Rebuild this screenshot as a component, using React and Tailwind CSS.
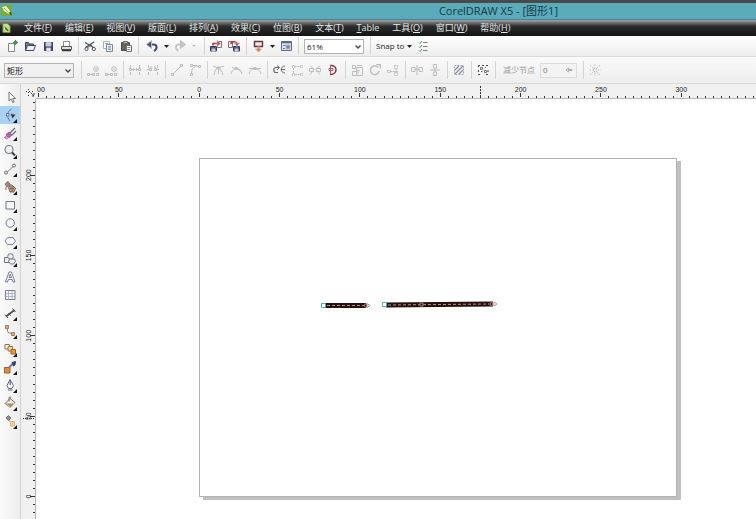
import React, { useEffect, useState } from "react";

const menus = [
  { label: "文件", hotkey: "F" },
  { label: "编辑", hotkey: "E" },
  { label: "视图", hotkey: "V" },
  { label: "版面", hotkey: "L" },
  { label: "排列", hotkey: "A" },
  { label: "效果", hotkey: "C" },
  { label: "位图", hotkey: "B" },
  { label: "文本", hotkey: "T" },
  { label: "Table" },
  { label: "工具", hotkey: "O" },
  { label: "窗口", hotkey: "W" },
  { label: "帮助", hotkey: "H" },
];

// 50 ruler units, in pixels at 61% zoom
const MAJOR = 80.35;
const MINOR = MAJOR / 10;

const icons = {
  // standard toolbar
  new: (
    <>
      <path d="M4.5 5.5h6v8h-6z" fill="#fff" stroke="#7d8a86" />
      <path d="M9 4.5h5M11.5 2v5M10 3l3 3M13 3l-3 3" stroke="#3f9a48" />
    </>
  ),
  open: (
    <>
      <path d="M3.5 12.5v-8h3l1 1.5h4v2" fill="#6f7c96" stroke="#3c4764" />
      <path d="M3.5 12.5l2-5h8l-2 5z" fill="#eef2f8" stroke="#3c4764" />
    </>
  ),
  save: (
    <>
      <path d="M4.5 4.5h8v8h-8z" fill="#44507c" stroke="#303a5e" />
      <path d="M6 4.5h5v3.5H6z" fill="#c9d1e6" />
      <path d="M6.5 10h4v3h-4z" fill="#f2f4fa" />
    </>
  ),
  print: (
    <>
      <path d="M5.5 8V3.5h6V8" fill="#fff" stroke="#8a8a8a" />
      <path d="M3.5 8.5h10v3h-10z" fill="#dedede" stroke="#555" />
      <path d="M4 12.5h9" stroke="#333" strokeWidth="1.5" />
    </>
  ),
  cut: (
    <>
      <path d="M3 4.5l8.5 5M3.5 9.5L12 4" stroke="#4c5360" strokeWidth="1.3" />
      <circle cx="4.5" cy="11" r="1.6" stroke="#4c5360" />
      <circle cx="11.8" cy="11" r="1.6" stroke="#4c5360" />
      <path d="M5.5 9.8L9 7l2 2.5" stroke="#4c5360" />
    </>
  ),
  copy: (
    <>
      <path d="M3.5 3.5h6v7h-6z" fill="#fff" stroke="#9eb5ae" />
      <path d="M6.5 6.5h6v7h-6z" fill="#eef3fa" stroke="#7b8798" />
      <path d="M8 8.5h3M8 10h3M8 11.5h3M5 5.5h3" stroke="#6889b5" strokeWidth=".8" />
    </>
  ),
  paste: (
    <>
      <path d="M3.5 4.5h8v8h-8z" fill="#68645a" stroke="#4f4a3c" />
      <path d="M5.5 3.5h4v2h-4z" fill="#c9c7bb" stroke="#686450" />
      <path d="M8.5 7.5h5v6h-5z" fill="#fff" stroke="#6d6d78" />
      <path d="M9.5 9.5h3M9.5 11.5h3" stroke="#8291ab" />
    </>
  ),
  undo: (
    <>
      <path d="M5 6.5h4.5c4 0 4 4.5.5 6.5" stroke="#3d4f77" strokeWidth="2" />
      <path d="M2.5 6.5L7.5 2.5v8z" fill="#3d4f77" />
    </>
  ),
  redo: (
    <>
      <path d="M11 6.5H7c-4 0-4 4.5-.5 6.5" stroke="#c4c6ca" strokeWidth="1.8" />
      <path d="M13.5 6.5l-5-4v8z" fill="#c4c6ca" />
    </>
  ),
  import: (
    <>
      <path d="M2.5 8.500h6v4.500h-6z" fill="#56608c" stroke="#343b62" />
      <path d="M4 11h3v2H4z" fill="#e8eaf4" />
      <path d="M9.5 3.5h4v6h-4z" fill="#f4f1f1" stroke="#856f76" />
      <path d="M5 7.5V5.5h5" stroke="#bb352f" strokeWidth="1.6" />
      <path d="M9 2.5l3.5 3L9 8.5z" fill="#bb352f" />
    </>
  ),
  export: (
    <>
      <path d="M7.500 8.500h6v4.500h-6z" fill="#56608c" stroke="#343b62" />
      <path d="M9 11h3v2H9z" fill="#e8eaf4" />
      <path d="M2.5 3.5h4v6h-4z" fill="#f4f1f1" stroke="#856f76" />
      <path d="M5 6c0-3 5-3 6-.5" stroke="#bb352f" strokeWidth="1.6" />
      <path d="M8.500 5h5L11 8.500z" fill="#bb352f" />
    </>
  ),
  launcher: (
    <>
      <path d="M4.5 3.5h8v5h-8z" fill="#f1e8ea" stroke="#6c3138" strokeWidth="1.4" />
      <path d="M7.5 9h2v2h2l-3 3-3-3h2z" fill="#e27a31" />
    </>
  ),
  welcome: (
    <>
      <path d="M3.5 3.5h10v9h-10z" fill="#dfe6f4" stroke="#5d6b8a" />
      <path d="M3.5 4.5h10" stroke="#5d6b8a" strokeWidth="1.6" />
      <path d="M5 7.5h3M5 10.5h2" stroke="#5d7bb5" />
      <path d="M8 7h4v4H8z" fill="#7281a5" />
    </>
  ),
  options: (
    <>
      <path d="M4 4.5l1 1 2-2.5M4 8.5l1 1 2-2.5M4 12.5l1 1 2-2.5" stroke="#559252" />
      <path d="M8 4.5h4.5M8 8.5h4.5M8 12.5h4.5" stroke="#7b857b" />
    </>
  ),
  // node editing bar
  addNode: (
    <>
      <path d="M2.5 11.5h2v2h-2zM7.5 11.5h2v2h-2zM11.5 11.5h2v2h-2zM4 12.5h3.5" />
      <circle cx="11" cy="7" r="2.4" />
      <path d="M10 7h2M11 6v2" />
    </>
  ),
  deleteNode: (
    <>
      <path d="M2.5 11.5h2v2h-2zM7.5 11.5h2v2h-2zM11.5 11.5h2v2h-2zM4 12.5h3.5" />
      <circle cx="11" cy="7" r="2.4" />
      <path d="M10 7h2" />
    </>
  ),
  joinNodes: (
    <path d="M3.5 3v3M3.5 10v3M12.5 3v3M12.5 10v3M2.5 6.5h2v2h-2zM11.5 6.5h2v2h-2zM5 7.5h2M9 7.5h2M6 6l1.5 1.5L6 9M10 6L8.5 7.5 10 9" />
  ),
  breakCurve: (
    <path d="M3.5 3v3M3.5 10v3M12.5 3v3M12.5 10v3M4.5 6.5h2v2h-2zM9.5 6.5h2v2h-2zM2 7.5h2M12 7.5h2M7 4.5l-2 1M9 4.5l2 1" />
  ),
  toLine: <path d="M4 12l8-8M2.5 11.5h2v2h-2zM11.5 2.5h2v2h-2z" />,
  toCurve: <path d="M4.5 11c0-4 2-7 7-7M3.5 11.5h2v2h-2zM11.5 3.5h2v2h-2zM3.5 2.5h2v2h-2zM5 3.5h5" />,
  cusp: <path d="M3 13c1-4 2-7 4-7s4 3 5 7M2 4l5 2 6-2M6 5h3v2H6zM7.5 7v5" />,
  smooth: <path d="M2 12c1-4 3-5 6-5s4 2 5 5M3 5.5l9 3M6.5 5.5h2v2h-2z" />,
  symmetrical: <path d="M2 12c1-4 3-5 6-5s5 1 6 5M2 6.5h12M7 5.5h2v2H7z" />,
  reverse: (
    <>
      <path d="M8 5.5H5c-3 0-3 5 0 5h2" stroke="#666" strokeWidth="1.2" />
      <path d="M6 3.5l2.500 2L6 8M14 4c-5 0-5 7 0 7M10 7.500h4" stroke="#66696c" />
    </>
  ),
  extend: (
    <path
      d="M3.5 3.5h2v2h-2zM11.5 3.5h2v2h-2zM11.5 11.5h2v2h-2zM3.5 11.5h2v2h-2zM5.5 4.5h6M4.5 6v5M6 12.5h5"
      strokeDasharray="2 .8"
    />
  ),
  extract: <path d="M3 3.5l4 4-4 5M13 3.5l-4 4 4 5M2.5 6.5h4v3h-4zM9.5 6.5h4v3h-4z" />,
  closeCurve: (
    <>
      <path d="M5 3.5c8-1 8 9 0 9" stroke="#8a3242" strokeWidth="1.5" />
      <path d="M5.5 3v9M4 6.5h4v2H4z" stroke="#a0606a" />
    </>
  ),
  stretch: <path d="M3.5 3.5h3v3h-3zM3.5 9.5h4v4h-4zM7.5 5.5h6v8h-6zM9 12V8l-1.5 1M9 8l2 1M8 3.5h5" />,
  rotate: (
    <>
      <path d="M10.5 5A4.3 4.3 0 1 0 12 9" strokeWidth="1.5" />
      <path d="M9 2.5h4.5v4M13.5 2.5L10 6" />
    </>
  ),
  align: <path d="M9.5 3.5h3v3h-3zM2.5 8.5h3v2h-3zM9.5 10.5h3v3h-3zM5.5 9.5h8M11 6.5v4" strokeDasharray="2 .6" />,
  reflectH: <path d="M8 3v10M2.5 5.5H6v4H2.5zM10 5.5h3.5v4H10zM6 7.5h4" />,
  reflectV: <path d="M3 8h10M6.5 2.5h3V6h-3zM6.5 10h3v3.5h-3zM8 6v4" />,
  elastic: (
    <>
      <path d="M3.5 3.5h9v9h-9z" stroke="#a3a8b0" strokeDasharray="2 1" />
      <path d="M4 8l4-4M4 12l8-8M8 12l4-4" stroke="#858a98" strokeWidth="1.1" />
    </>
  ),
  selectAll: (
    <>
      <path d="M3 3.5h2M3.5 3v2M13 3.5h-2M3 12.5h2M13 12.5h-2M7 3.5h2M3.5 8v2M13 8v2" stroke="#444" />
      <path d="M5.5 5.5h2v2h-2zM9.5 8.5h2v2h-2zM6 9.5h1.5M10 5.5h1" stroke="#777" />
    </>
  ),
  bounding: (
    <path
      d="M3 3l3 3M13 3l-3 3M3 13l3-3M13 13l-3-3M8 2.5v3M8 10.5v3M2.5 8h3M10.5 8h3M6.5 6.5h3v3h-3z"
      strokeDasharray="1.5 1"
    />
  ),
  // toolbox
  pick: <path d="M7 3v9l2.2-2 1.5 3.5 1.5-.7-1.6-3.3h3z" fill="#fff" stroke="#666" strokeWidth=".9" />,
  shape: (
    <>
      <path d="M9.5 2C4.5 5 4.5 10 8 14" stroke="#55779a" />
      <path d="M4.5 6.5H7V9H4.5z" fill="#fff" stroke="#55779a" />
      <path d="M8 6.5l6 .8-3.5 4.7z" fill="#1c2f57" />
    </>
  ),
  crop: (
    <>
      <path d="M8 8l5-5M10 10l4-4" stroke="#666a76" strokeWidth="1.2" />
      <path d="M4 9.500l3-2.500 3 3-3 2.500z" fill="#c25da5" stroke="#8d4a80" strokeWidth=".8" />
      <path d="M2.500 12.500l2.500-2 1.500 2-2 1.500z" fill="#e7a3d2" stroke="#9b5188" strokeWidth=".8" />
    </>
  ),
  zoom: (
    <>
      <circle cx="7" cy="6.5" r="4" fill="#eef1f2" stroke="#71777b" strokeWidth="1.1" />
      <path d="M5 5c1-1 2-1 3-.5" stroke="#fff" />
      <path d="M10 9.5l3 3" stroke="#3a3d3f" strokeWidth="2" />
    </>
  ),
  freehand: (
    <>
      <path d="M4 12l8-7" stroke="#7c8287" />
      <circle cx="4" cy="11.5" r="1.5" fill="#dcdfe0" stroke="#73787a" />
      <circle cx="12" cy="4.5" r="1.5" fill="#dcdfe0" stroke="#73787a" />
    </>
  ),
  smartFill: (
    <>
      <path d="M3 5l3-2.500L8.500 6 5 8z" fill="#a88c78" stroke="#69584e" strokeWidth=".8" />
      <path d="M6.500 8.500l3-2.500 4 3-1.500 4H8z" fill="#bd987a" stroke="#705b50" strokeWidth=".9" />
      <path d="M4 8v3M8 9.500h4M10 7v6" stroke="#82685a" />
    </>
  ),
  rectangle: <path d="M4 4.500h8.500V12H4z" fill="#f7f8fa" stroke="#6f7886" />,
  ellipse: <ellipse cx="8.2" cy="8" rx="4.2" ry="4.2" fill="#f5f6fa" stroke="#73798a" />,
  polygon: <path d="M5.5 4.5H11L13.5 8 11 11.5H5.500L3 8z" fill="#f5f6fa" stroke="#7c8392" />,
  basicShapes: (
    <>
      <path d="M2.5 6.5h5v5h-5z" fill="#eceef2" stroke="#6e7482" />
      <circle cx="8.5" cy="5.5" r="2.8" fill="#eceef2" stroke="#6e7482" />
      <path d="M7.500 8h5l1 2.500-2 2.500h-3l-2-2.500z" fill="#eceef2" stroke="#6e7482" />
    </>
  ),
  text: (
    <path
      d="M3.5 13L7 3h2.500L13 13h-2l-.9-2.500H6.400L5.500 13zM7 8.500h2.500L8.200 5z"
      fill="#f4f5f9"
      stroke="#6e7486"
      strokeWidth=".9"
    />
  ),
  table: (
    <>
      <path d="M3.5 3.5H13v9H3.5z" fill="#f4f5fa" stroke="#787e8e" />
      <path d="M6.5 4v8.500M10 4v8.500M4 6.500h9M4 9.500h9" stroke="#a5aaba" strokeWidth=".8" />
    </>
  ),
  dimension: (
    <>
      <path d="M4 11.5L12.5 5" stroke="#4a4d50" strokeWidth="1.6" />
      <path d="M3 9.5l3 3.500M10.500 3.500l3 3.500M6.500 8l2 2.500" stroke="#4a4d50" />
    </>
  ),
  connector: (
    <>
      <path d="M5 5.5l1 4 4 1" stroke="#858585" />
      <path d="M3.5 2.5h3v3h-3z" fill="#e2a877" stroke="#9b6843" strokeWidth=".8" />
      <path d="M9.5 9.5h3v3h-3z" fill="#e2a877" stroke="#9b6843" strokeWidth=".8" />
    </>
  ),
  blend: (
    <>
      <path d="M3 3.5h4.5V8H3z" fill="#fff" stroke="#8a7254" />
      <path d="M6 5.5h4.5V10H6z" fill="#f6d4a0" stroke="#9b733e" />
      <path d="M9 8.5h4.5V13H9z" fill="#e9993b" stroke="#a86320" />
    </>
  ),
  eyedropper: (
    <>
      <path d="M2.5 8.5H8V14H2.5z" fill="#dd8b42" stroke="#a65f25" />
      <path d="M7 8.5l4-4" stroke="#6e7fa8" strokeWidth="2" />
      <path d="M10 3.5l3.5-1L13 6l-1.5 1z" fill="#35466e" stroke="#35466e" />
    </>
  ),
  outline: (
    <>
      <path d="M8 2.5l-3 6 1.5 3H10l1.500-3z" fill="#f6f7fb" stroke="#5f6980" />
      <path d="M8.2 3v5M6 13h4.5" stroke="#5f6980" strokeWidth="1.2" />
    </>
  ),
  fill: (
    <>
      <path d="M3 8.5l5-5 5 4-4.500 5z" fill="#f7efe2" stroke="#776b5b" />
      <path d="M4 8.5h8.500l-4 3.800z" fill="#b88646" />
      <path d="M7 6.5V3c0-1.500 2-1.500 2 0" stroke="#776b5b" />
    </>
  ),
  interactiveFill: (
    <>
      <path d="M4 5l2.500-2.500L9 5 6.500 7.500z" fill="#8c8c93" stroke="#62626c" strokeWidth=".8" />
      <path d="M6.500 7l3 3" stroke="#9b8358" />
      <path d="M8.500 8.500h4V13h-4z" fill="#f3cf8f" stroke="#dcb77d" />
    </>
  ),
};

const standardBar = [
  ["new", "open", "save", "print"],
  ["cut", "copy", "paste"],
];

const nodeBar = [
  ["addNode", "deleteNode"],
  ["joinNodes", "breakCurve"],
  ["toLine", "toCurve"],
  ["cusp", "smooth", "symmetrical"],
  ["reverse", "extend", "extract", "closeCurve"],
  ["stretch", "rotate", "align"],
  ["reflectH", "reflectV"],
  ["elastic"],
  ["selectAll"],
];

const tools = [
  "pick",
  "shape",
  "crop",
  "zoom",
  "freehand",
  "smartFill",
  "rectangle",
  "ellipse",
  "polygon",
  "basicShapes",
  "text",
  "table",
  "dimension",
  "connector",
  "blend",
  "eyedropper",
  "outline",
  "fill",
  "interactiveFill",
];

// tools that have no flyout menu
const plainTools = ["pick", "text", "table"];

const Icon = ({ name }) => (
  <svg viewBox="0 0 16 16" className="size-4 text-[#bdbdbd]" fill="none" stroke="currentColor">
    {icons[name]}
  </svg>
);

const IconButton = ({ name }) => (
  <button type="button" aria-label={name} className="flex h-[18px] w-[18px] shrink-0 items-center justify-center">
    <Icon name={name} />
  </button>
);

const DropArrow = ({ label, disabled }) => (
  <button type="button" aria-label={label} className="flex h-4 w-[10px] shrink-0 items-center justify-center">
    <svg viewBox="0 0 5 3" className={disabled ? "h-[2px] w-1 text-[#b5b5b5]" : "h-[3px] w-[5px] text-[#222]"}>
      <path d="M0 0h5L2.5 3z" fill="currentColor" />
    </svg>
  </button>
);

const Separator = () => <span className="mr-[2px] ml-[3px] h-[18px] w-px shrink-0 bg-[#d3d3d3]" />;

const Select = ({ label, value, options, onChange, className }) => (
  <div className={`relative h-[15px] shrink-0 ${className}`}>
    <select
      aria-label={label}
      value={value}
      onChange={(e) => onChange(e.target.value)}
      className="block h-full w-full appearance-none border border-[#b4b4b4] pl-[2px] text-[8px] leading-[13px] text-[#111]"
    >
      {options.map((option) => (
        <option key={option}>{option}</option>
      ))}
    </select>
    <svg viewBox="0 0 6 4" className="pointer-events-none absolute top-[6px] right-[3px] h-1 w-[6px]" fill="none">
      <path d="M.5.5L3 3 5.5.5" stroke="#444" strokeWidth="1.3" />
    </svg>
  </div>
);

const HorizontalRuler = () => {
  const [width, setWidth] = useState(window.innerWidth);

  useEffect(() => {
    const handleResize = () => setWidth(window.innerWidth);
    window.addEventListener("resize", handleResize);
    return () => window.removeEventListener("resize", handleResize);
  }, []);

  const count = Math.ceil((width - 50) / MINOR) + 2;
  const ticks = Array.from({ length: count }, (_, i) => i);
  // the first number is cut by the corner, so only its last two digits show
  const labels = ticks.filter((i) => i % 10 === 0 && i > 0 && i * MINOR < width - 50);

  return (
    <svg className="h-[15px] min-w-0 flex-1 border-b border-[#b5b5b5]">
      {ticks.map((i) => {
        const x = Math.floor(2.5 + i * MINOR) + 0.5;
        const major = i % 10 === 0;
        return <path key={i} d={`M${x} ${major ? 9 : 12}V${major ? 13 : 14}`} stroke="#333" />;
      })}
      <text x="1" y="8" className="fill-[#222] text-[7px]">
        00
      </text>
      {labels.map((i) => (
        <text key={i} x={2.5 + i * MINOR} y="8" textAnchor="middle" className="fill-[#222] text-[7px]">
          {Math.abs((i / 10 - 2) * 50)}
        </text>
      ))}
      <path d="M444.5 2v12" stroke="#333" strokeDasharray="2 1" />
    </svg>
  );
};

const VerticalRuler = () => {
  const ticks = Array.from({ length: 100 }, (_, i) => i - 50);
  return (
    <svg className="w-[15px] shrink-0 border-r border-[#b5b5b5]">
      {ticks.map((i) => {
        const y = Math.floor(397.5 + i * MINOR) + 0.5;
        return <path key={i} d={`M${i % 10 === 0 ? 9 : 12} ${y}H14`} stroke="#333" />;
      })}
      {[0, 50, 100, 150, 200].map((value) => {
        const y = 397.5 - (value / 50) * MAJOR;
        return (
          <text
            key={value}
            x="10"
            y={y}
            textAnchor="middle"
            transform={`rotate(-90 10 ${y})`}
            className="fill-[#222] text-[7px]"
          >
            {value}
          </text>
        );
      })}
      <path d="M2 319.5h12" stroke="#333" strokeDasharray="1 1" />
    </svg>
  );
};

const Drawing = () => (
  <svg viewBox="1 0 476 337" className="h-full w-full" fill="none">
    <path d="M126 146.5h41" stroke="#2a100c" strokeWidth="5" />
    <path d="M128 146.5h38" stroke="#a89884" strokeDasharray="3 2" />
    <path d="M122.5 144.5h4v4h-4z" fill="#fff" stroke="#4fb3b3" />
    <path d="M165.5 145h2v3h-2z" stroke="#8f7165" />
    <path d="M168 144.5l3 2-3 2z" fill="#fff" stroke="#888" strokeWidth=".8" />

    <path d="M187 146l107-1" stroke="#2a100c" strokeWidth="5" />
    <path d="M189 146l104-1" stroke="#a89884" strokeDasharray="3 2" />
    <path d="M183.5 143.5h4v4h-4z" fill="#fff" stroke="#4fb3b3" />
    <path d="M221 144h3v3h-3z" fill="#2a100c" stroke="#a38477" />
    <path d="M291.5 143.5h2v3h-2z" stroke="#8f7165" />
    <path d="M295 143l3 2-3 2z" fill="#fff" stroke="#888" strokeWidth=".8" />
  </svg>
);

const App = () => {
  const [tool, setTool] = useState("shape");
  const [zoom, setZoom] = useState("61%");
  const [mode, setMode] = useState("矩形");
  const [reduce, setReduce] = useState("0");

  return (
    <div className="flex min-h-screen flex-col overflow-hidden bg-[#f0f0f0] font-['Open_Sans','Noto_Sans_CJK_SC',sans-serif] text-[#222]">
      <header className="flex h-5 shrink-0 items-center border-t-[3px] border-b border-t-[#494949] border-b-[#477f8c] bg-[#5aabbb]">
        <svg viewBox="0 0 12 12" className="ml-[1px] h-3 w-3" fill="none">
          <path d="M0 0h11v11H0z" fill="#78ad35" />
          <path d="M1 2l4-1 4 5-1 3-5-3z" fill="#f3f6cf" />
          <path d="M3 3l5 5M8 8l3 3" stroke="#a9bd62" />
          <path d="M8 8l2-1 1 4z" fill="#2d3d1d" />
        </svg>
        <h1 className="mr-[198px] ml-auto text-[11px] leading-4 text-[#173a45]">CorelDRAW X5 - [图形1]</h1>
      </header>

      <nav className="flex h-4 shrink-0 items-center gap-px bg-linear-to-b from-[#a5a8a8] via-[#2c2c2c] via-40% to-[#141414] text-[9px] leading-4 text-[#e4e4e4]">
        <svg viewBox="0 0 10 12" className="mr-[6px] ml-[2px] h-3 w-[9px]" fill="none">
          <path d="M1 1h5l3 3v7H1z" fill="#c5dc92" stroke="#6a8f39" />
          <path d="M3 4l4 4v2L4 8z" fill="#457026" />
        </svg>
        {menus.map((menu) => (
          <button key={menu.label} type="button" className="shrink-0 px-[6px] whitespace-nowrap">
            {menu.hotkey ? (
              <>
                {menu.label}(<u>{menu.hotkey}</u>)
              </>
            ) : (
              <>
                <u>T</u>able
              </>
            )}
          </button>
        ))}
      </nav>

      <div className="flex h-[21px] shrink-0 items-center border-b border-[#d9d9d9] bg-linear-to-b from-white to-[#ededed] pl-[3px]">
        {standardBar.map((group) => (
          <React.Fragment key={group[0]}>
            {group.map((name) => (
              <IconButton key={name} name={name} />
            ))}
            <Separator />
          </React.Fragment>
        ))}
        <div className="flex items-center px-[2px]">
          <IconButton name="undo" />
          <DropArrow label="undo list" />
          <IconButton name="redo" />
          <DropArrow label="redo list" disabled />
        </div>
        <Separator />
        <IconButton name="import" />
        <IconButton name="export" />
        <Separator />
        <IconButton name="launcher" />
        <DropArrow label="launcher list" />
        <IconButton name="welcome" />
        <Separator />
        <Select
          label="zoom level"
          value={zoom}
          options={["61%", "100%", "200%"]}
          onChange={setZoom}
          className="mx-[3px] w-[60px] bg-white"
        />
        <Separator />
        <button type="button" className="ml-[3px] shrink-0 text-[8px] whitespace-nowrap">
          Snap to
        </button>
        <DropArrow label="snap list" />
        <IconButton name="options" />
      </div>

      <div className="flex h-[27px] shrink-0 items-center border-b border-[#d9d9d9] bg-linear-to-b from-[#fafafa] to-[#ededed] pl-1">
        <Select
          label="selection mode"
          value={mode}
          options={["矩形", "手绘"]}
          onChange={setMode}
          className="mr-1 w-[70px] bg-[#f0f0f0]"
        />
        <Separator />
        {nodeBar.map((group) => (
          <React.Fragment key={group[0]}>
            {group.map((name) => (
              <IconButton key={name} name={name} />
            ))}
            <Separator />
          </React.Fragment>
        ))}
        <label htmlFor="reduce" className="mx-[5px] shrink-0 text-[8px] whitespace-nowrap text-[#9c9c9c]">
          减少节点
        </label>
        <div className="mr-[3px] flex h-[15px] w-[37px] shrink-0 items-center border border-[#dcdcdc] bg-[#f3f3f3]">
          <input
            id="reduce"
            value={reduce}
            onChange={(e) => setReduce(e.target.value)}
            className="w-6 pl-[2px] text-[8px] leading-3 text-[#777]"
          />
          <svg viewBox="0 0 8 6" className="h-[6px] w-2" fill="none" stroke="#aaa">
            <path d="M1 3l2.500-2v1.500H7v1H3.500V5z" />
          </svg>
        </div>
        <Separator />
        <IconButton name="bounding" />
      </div>

      <main className="flex flex-1">
        <aside className="flex w-[21px] shrink-0 flex-col border-r border-[#d2d2d2] bg-linear-to-r from-[#fbfbfb] to-[#ededed] pt-1">
          {tools.map((name) => (
            <button
              key={name}
              type="button"
              aria-label={name}
              aria-pressed={tool === name}
              onClick={() => setTool(name)}
              className={`relative flex h-[18px] w-full items-center justify-center ${tool === name ? "bg-[#a8d1f2]" : ""}`}
            >
              <Icon name={name} />
              {!plainTools.includes(name) && (
                <svg viewBox="0 0 4 4" className="absolute right-[3px] bottom-[1px] size-1">
                  <path d="M4 0v4H0z" fill="#111" />
                </svg>
              )}
            </button>
          ))}
        </aside>

        <div className="flex min-w-0 flex-1 flex-col font-['Liberation_Sans',sans-serif]">
          <div className="flex">
            <svg viewBox="0 0 15 15" className="size-[15px] shrink-0" fill="none" stroke="#333">
              <path d="M5 7.5h9M7.5 5v9" strokeDasharray="1 2" />
              <path d="M8 7l5 5M13 9v3h-3" strokeDasharray="2 1" />
            </svg>
            <HorizontalRuler />
          </div>
          <div className="flex flex-1">
            <VerticalRuler />
            <div className="min-w-0 flex-1 overflow-hidden bg-white pt-[59px] pb-4 pl-[163px]">
              <div className="h-[339px] w-[478px] border border-[#b3b3b3] bg-white shadow-[4px_3px_0_#bfbfbf]">
                <Drawing />
              </div>
            </div>
          </div>
        </div>
      </main>
    </div>
  );
};

export default App;
